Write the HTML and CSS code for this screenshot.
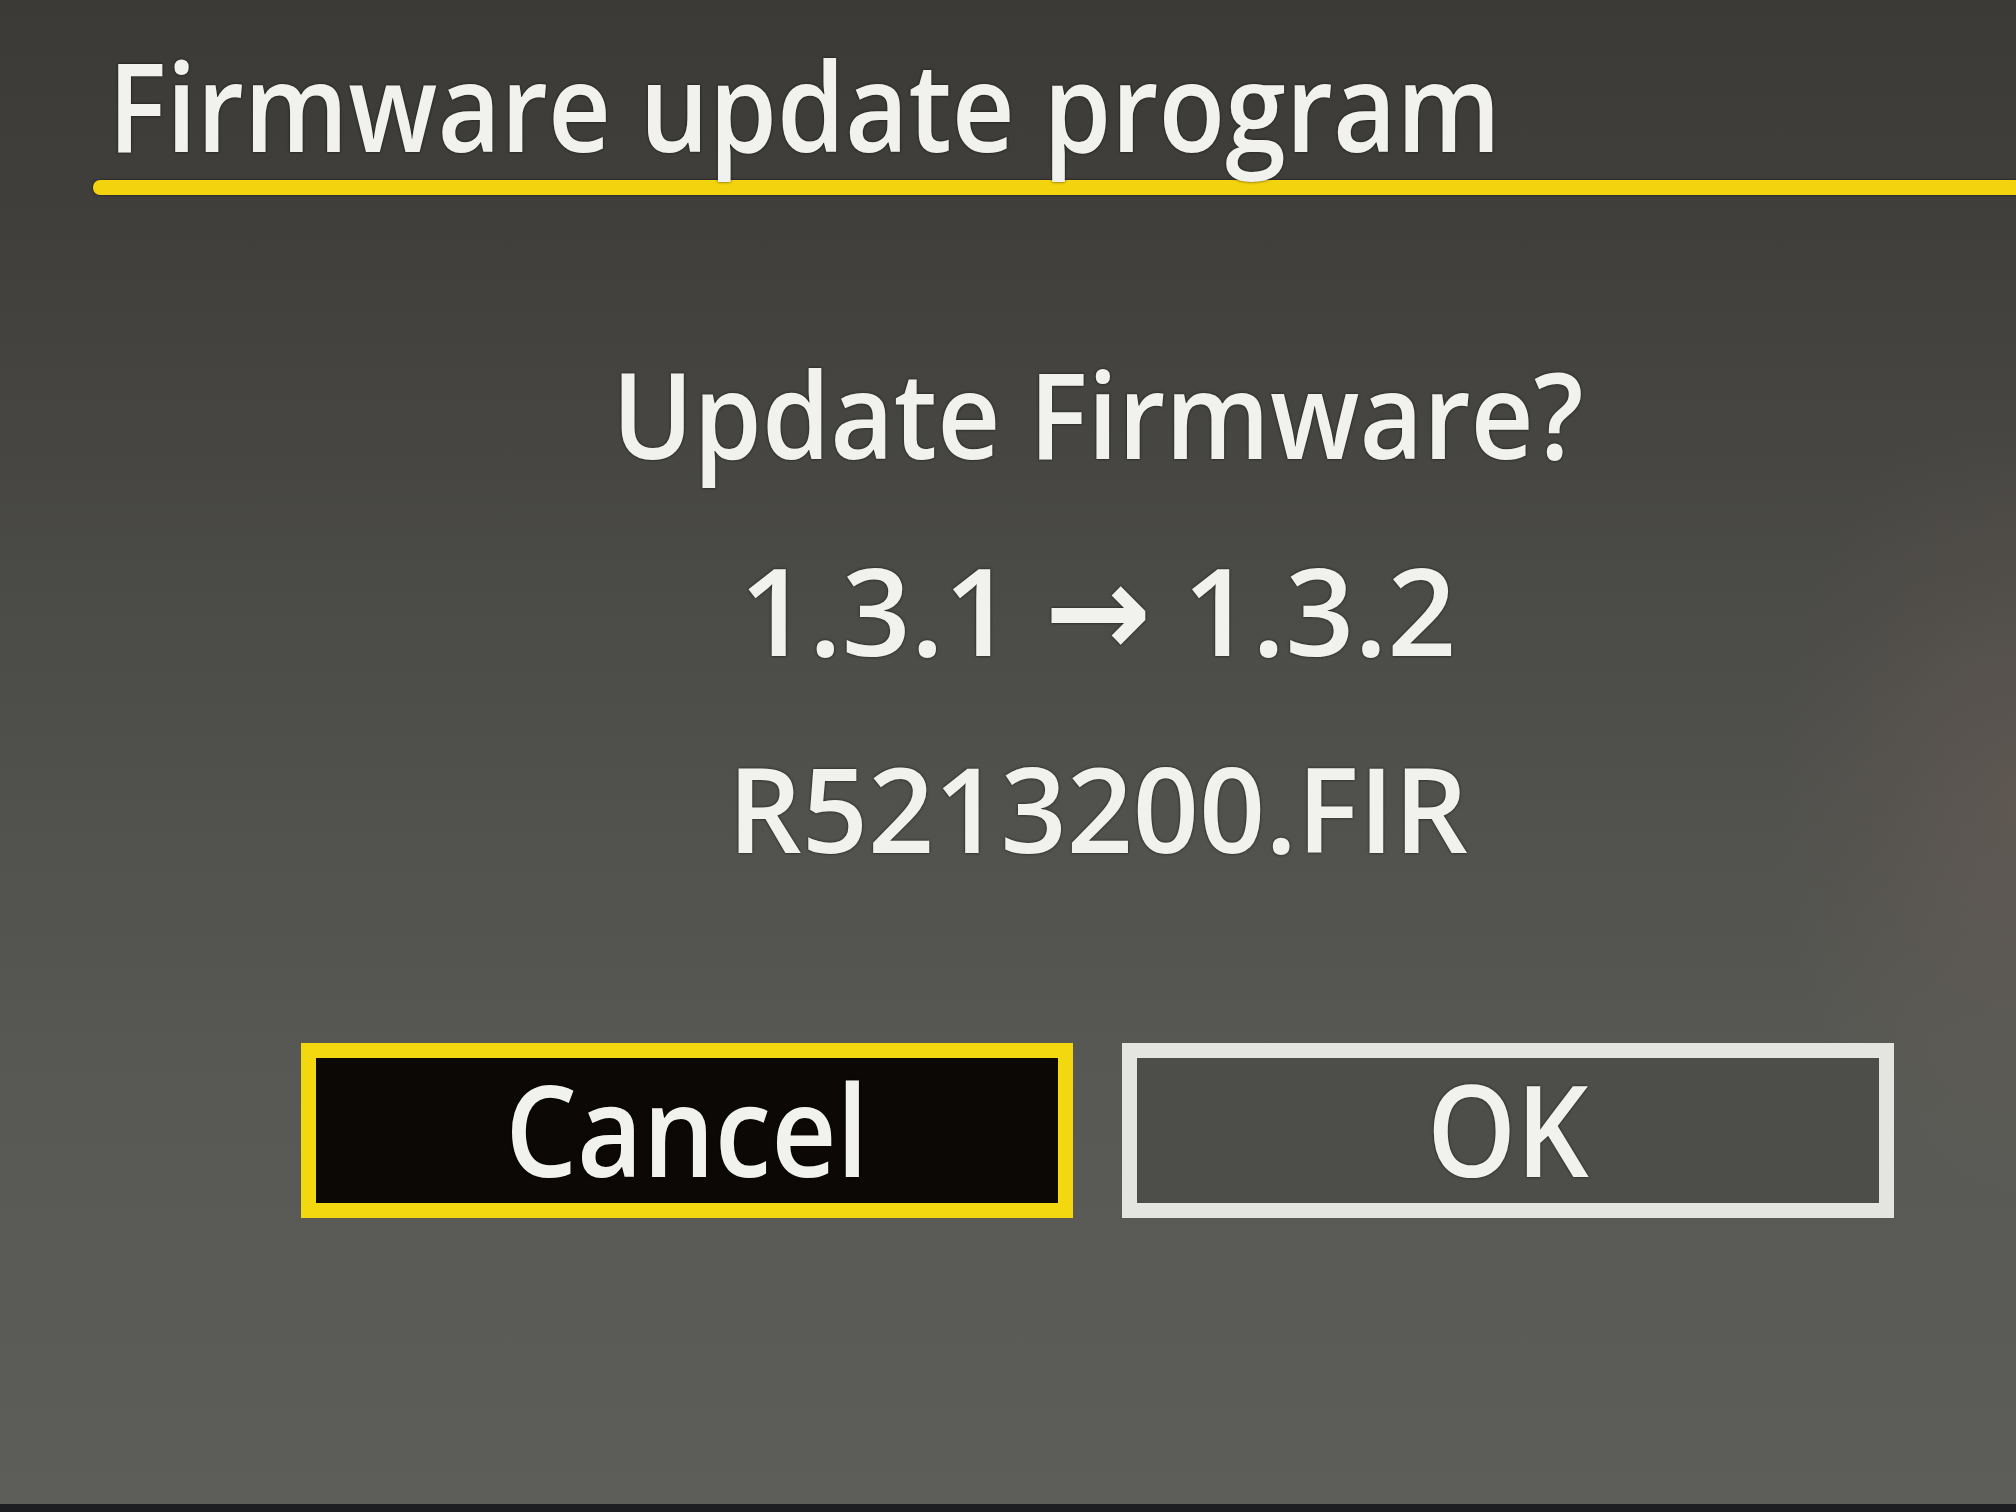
FILE: index.html
```html
<!DOCTYPE html>
<html lang="en">
<head>
<meta charset="utf-8">
<title>Firmware update program</title>
<link rel="stylesheet" href="styles.css">
</head>
<body>
<div class="screen">
  <header class="header">
    <h1 class="title">Firmware update program</h1>
    <div class="rule"></div>
  </header>
  <main class="dialog">
    <p class="line question">Update Firmware?</p>
    <p class="line version">1.3.1 <span class="arrow">→</span> 1.3.2</p>
    <p class="line file">R5213200.FIR</p>
    <div class="buttons">
      <div class="btn btn-cancel"><span class="btn-label">Cancel</span></div>
      <div class="btn btn-ok"><span class="btn-label">OK</span></div>
    </div>
  </main>
</div>
</body>
</html>
```

FILE: styles.css
```css
html, body {
  margin: 0;
  padding: 0;
}
body {
  width: 2016px;
  height: 1512px;
  overflow: hidden;
  font-family: "Open Sans", "Noto Sans", "DejaVu Sans", sans-serif;
  color: #f1f2ee;
}
.screen {
  width: 2016px;
  height: 1512px;
  box-sizing: border-box;
  border-bottom: 8px solid #1c1e21;
  background:
    radial-gradient(ellipse 240px 400px at 2016px 800px, rgba(140, 110, 95, 0.22), rgba(140, 110, 95, 0) 100%),
    linear-gradient(180deg, #3b3a37 0%, #42413e 20%, #4d4d4a 45%, #575854 70%, #5d5e5a 100%);
  display: flex;
  flex-direction: column;
}
.header {
  padding-top: 43px;
}
.title {
  margin: 0 0 0 108px;
  font-size: 123px;
  line-height: 123px;
  font-weight: 600;
  white-space: nowrap;
  transform: scaleX(0.889);
  transform-origin: left center;
  text-shadow: 0 0 3px rgba(0, 0, 0, 0.7);
}
.rule {
  margin: 14px 0 0 93px;
  height: 15px;
  background: #f3d20e;
  border-radius: 7px 0 0 7px;
  box-shadow: 0 0 3px rgba(0, 0, 0, 0.6);
}
.dialog {
  width: 1593px;
  margin: 159px 0 0 301px;
  display: flex;
  flex-direction: column;
  align-items: center;
  text-align: center;
}
.line {
  margin: 0;
  font-weight: 600;
  white-space: nowrap;
  text-shadow: 0 0 3px rgba(0, 0, 0, 0.7);
}
.question {
  font-size: 119px;
  line-height: 119px;
  transform: scaleX(0.922);
}
.version {
  margin-top: 75px;
  font-size: 122px;
  line-height: 122px;
  transform: scaleX(0.99);
}
.arrow {
  font-family: "DejaVu Sans", sans-serif;
  font-weight: 700;
  font-size: 1.06em;
}
.file {
  margin-top: 77px;
  font-size: 117px;
  line-height: 117px;
  transform: scaleX(0.99);
}
.buttons {
  margin-top: 177px;
  align-self: stretch;
  display: flex;
  gap: 49px;
}
.btn {
  width: 772px;
  height: 175px;
  box-sizing: border-box;
  border: 15px solid;
  display: flex;
  align-items: center;
  justify-content: center;
  font-size: 126px;
  font-weight: 600;
  text-shadow: 0 0 3px rgba(0, 0, 0, 0.7);
}
.btn-label {
  line-height: 126px;
  margin-bottom: 6px;
  transform: scaleX(0.9);
}
.btn-cancel {
  border-color: #f4d80f;
  background: #0b0806;
}
.btn-ok {
  border-color: #e4e5e1;
  background: #4d4e4a;
}
```
